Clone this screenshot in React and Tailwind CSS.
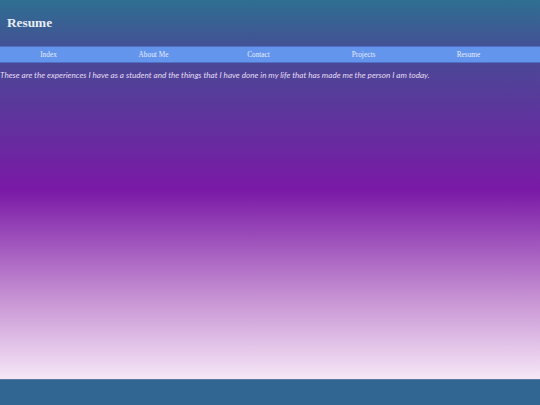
export default function App() {

  const links = ['Index', 'About Me', 'Contact', 'Projects', 'Resume'];

  return (

    <div className="flex flex-col h-[405px] w-[540px] overflow-hidden bg-[linear-gradient(to_bottom,#2e6f91_0%,#4a4896_15%,#7a19a6_47%,#c58fd2_73%,#f7e9f7_94%,#f7e9f7_100%)]">

      {/* HEADER */}

      <header className="h-[46px] flex items-center pl-[7px]">

        <h1 className="text-[13.3px] font-bold text-[#e8eef8] font-['Liberation_Serif',serif] leading-none">
          Resume
        </h1>

      </header>

      {/* NAV */}

      <nav className="h-[17px] bg-[#6495ed] border-y border-[#4f6fc4] flex items-center">

        <ul className="flex -ml-[4px]">

          {links.map((l) => (
            <li
              key={l}
              className="w-[105px] text-center text-[7.3px] text-[#e6ecfa] font-['Liberation_Serif',serif] leading-none"
            >
              {l}
            </li>
          ))}

        </ul>

      </nav>

      {/* CONTENT */}

      <main className="flex-1">

        <p className="mt-[8px] text-[8.15px] italic text-[#e4dcf2] font-['Lato',sans-serif] leading-none">
          These are the experiences I have as a student and the things that I have done in my life that has made me the person I am today.
        </p>

      </main>

      {/* FOOTER */}

      <footer className="h-[26px] bg-[#316592] border-t border-[#5a7aa0]" />

    </div>

  );

}
